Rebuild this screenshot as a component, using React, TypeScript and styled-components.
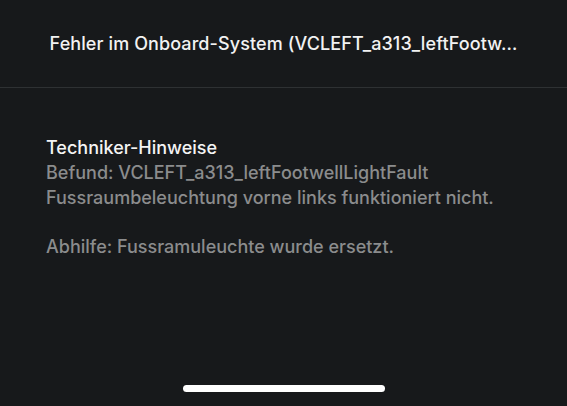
import React from 'react';
import styled, { createGlobalStyle } from 'styled-components';

const GlobalStyle = createGlobalStyle`
  html, body {
    margin: 0;
    padding: 0;
    background: #17191b;
  }
  body {
    font-family: Inter, 'Noto Sans', 'Liberation Sans', sans-serif;
    -webkit-font-smoothing: antialiased;
  }
`;

const notes = {
  title: 'Techniker-Hinweise',
  finding: 'Befund: VCLEFT_a313_leftFootwellLightFault',
  description: 'Fussraumbeleuchtung vorne links funktioniert nicht.',
  remedy: 'Abhilfe: Fussramuleuchte wurde ersetzt.',
};

function App() {
  return (
    <>
      <GlobalStyle />
      <Screen>
        <Header>
          <HeaderTitle>Fehler im Onboard-System (VCLEFT_a313_leftFootw…</HeaderTitle>
        </Header>
        <Body>
          <NoteTitle>{notes.title}</NoteTitle>
          <NoteLine>{notes.finding}</NoteLine>
          <NoteLine>{notes.description}</NoteLine>
          <Spacer />
          <NoteLine>{notes.remedy}</NoteLine>
        </Body>
        <HomeIndicator />
      </Screen>
    </>
  );
}

export default App;

const Screen = styled.div`
  width: 567px;
  height: 406px;
  display: flex;
  flex-direction: column;
  background: #17191b;
  overflow: hidden;
`;

const Header = styled.div`
  height: 88px;
  display: flex;
  align-items: center;
  justify-content: center;
  border-bottom: 1px solid #2e3133;
  box-sizing: border-box;
`;

const HeaderTitle = styled.div`
  color: #f2f2f2;
  font-size: 18px;
  font-weight: 500;
  white-space: nowrap;
  letter-spacing: 0.1px;
`;

const Body = styled.div`
  flex: 1;
  display: flex;
  flex-direction: column;
  padding: 47px 46px 0;
  font-size: 18px;
  line-height: 25px;
`;

const NoteTitle = styled.div`
  color: #f4f4f4;
  font-weight: 500;
`;

const NoteLine = styled.div`
  color: #8b8c8d;
  font-weight: 500;
`;

const Spacer = styled.div`
  height: 24px;
`;

const HomeIndicator = styled.div`
  align-self: center;
  width: 202px;
  height: 7px;
  border-radius: 4px;
  background: #ffffff;
  margin-bottom: 14px;
`;
